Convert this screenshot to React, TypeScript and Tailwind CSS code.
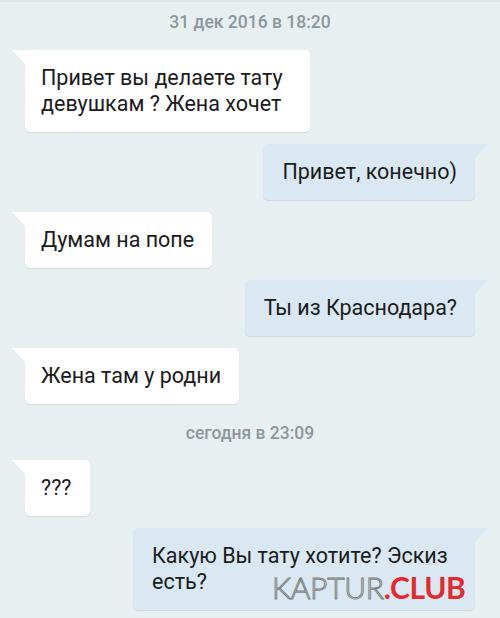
import React from "react";

function TailLeft() {
  return (
    <svg className="absolute left-[-13px] top-0" width="14" height="16" viewBox="0 0 14 16">
      <path d="M0 0 H14 V15 Z" fill="#ffffff" />
    </svg>
  );
}
function TailRight() {
  return (
    <svg className="absolute right-[-13px] top-0" width="14" height="16" viewBox="0 0 14 16">
      <path d="M0 0 H14 L0 15 Z" fill="#d9e8f3" />
    </svg>
  );
}

function In({ children, w }: { children: React.ReactNode; w?: string }) {
  return (
    <div className="flex justify-start pl-[25px]">
      <div
        className={`relative bg-white rounded-[5px] rounded-tl-none pl-[16px] pr-[18px] py-[15px] leading-[26px] text-[21.5px] text-[#1b1b1b] shadow-[0_1px_1px_rgba(0,0,0,0.10)] ${w ?? ""}`}
      >
        <TailLeft />
        {children}
      </div>
    </div>
  );
}

function Out({ children, w }: { children: React.ReactNode; w?: string }) {
  return (
    <div className="flex justify-end pr-[25px]">
      <div
        className={`relative bg-[#d9e8f3] rounded-[5px] rounded-tr-none pl-[19px] pr-[18px] py-[15px] leading-[26px] text-[21.5px] text-[#1b1b1b] shadow-[0_1px_1px_rgba(0,0,0,0.10)] ${w ?? ""}`}
      >
        <TailRight />
        {children}
      </div>
    </div>
  );
}

export default function App() {
  return (
    <div
      className="relative w-[500px] h-[618px] overflow-hidden bg-[#e8eff0] flex flex-col"
      style={{ fontFamily: "Roboto, 'Noto Sans', sans-serif" }}
    >
      <div className="h-[2px] bg-[#dde5e6]" />
      <div className="mt-[9px] text-center text-[17.5px] leading-[22px] font-medium text-[#8d979c]">
        31 дек 2016 в 18:20
      </div>
      <div className="mt-[17px] flex flex-col gap-[12px]">
        <In w="w-[285px]">
          Привет вы делаете тату девушкам ? Жена хочет
        </In>
        <Out>Привет, конечно)</Out>
        <In>Думам на попе</In>
        <Out>Ты из Краснодара?</Out>
        <In>Жена там у родни</In>
      </div>
      <div className="mt-[18px] text-center text-[17.5px] leading-[22px] font-medium text-[#8d979c]">
        сегодня в 23:09
      </div>
      <div className="mt-[16px] flex flex-col gap-[12px]">
        <In>???</In>
        <Out w="w-[342px]">Какую Вы тату хотите? Эскиз есть?</Out>
      </div>
      <div
        className="absolute left-[272px] top-[572px] text-[30px] leading-[30px] tracking-[-0.3px]"
        style={{ fontFamily: "Lato, Inter, sans-serif" }}
      >
        <span className="text-white font-light [-webkit-text-stroke:1px_#7d7d7d]">KAPTUR</span>
        <span className="text-[#e42a2e] font-bold">.CLUB</span>
      </div>
    </div>
  );
}
